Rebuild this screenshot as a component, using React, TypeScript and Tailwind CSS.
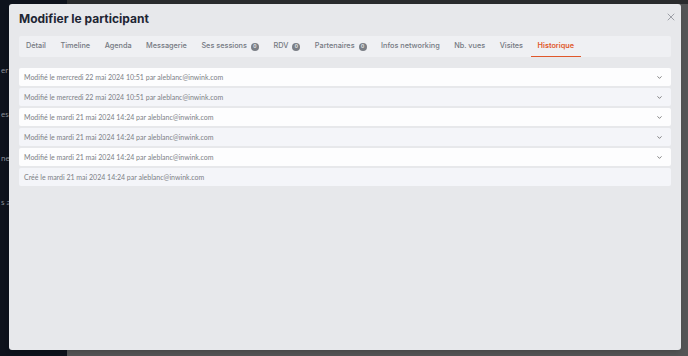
import { ChevronDown, X } from "lucide-react";

const tabs = [
  { label: "Détail" },
  { label: "Timeline" },
  { label: "Agenda" },
  { label: "Messagerie" },
  { label: "Ses sessions", badge: true },
  { label: "RDV", badge: true },
  { label: "Partenaires", badge: true },
  { label: "Infos networking" },
  { label: "Nb. vues" },
  { label: "Visites" },
  { label: "Historique", active: true },
];

const rows = [
  { text: "Modifié le mercredi 22 mai 2024 10:51 par aleblanc@inwink.com", chevron: true },
  { text: "Modifié le mercredi 22 mai 2024 10:51 par aleblanc@inwink.com", chevron: true },
  { text: "Modifié le mardi 21 mai 2024 14:24 par aleblanc@inwink.com", chevron: true },
  { text: "Modifié le mardi 21 mai 2024 14:24 par aleblanc@inwink.com", chevron: true },
  { text: "Modifié le mardi 21 mai 2024 14:24 par aleblanc@inwink.com", chevron: true },
  { text: "Créé le mardi 21 mai 2024 14:24 par aleblanc@inwink.com", chevron: false },
];

const App = () => {
  return (
    <div className="relative w-[688px] h-[356px] overflow-hidden flex bg-[#555657]">
      {/* Page behind the overlay */}
      <div className="w-[67px] h-full bg-[#0e121c] flex flex-col gap-[32px] pt-[64px] pl-[1px] text-[8px] text-[#8b8f97] font-['Lato',sans-serif]">
        <span>er</span>
        <span>es</span>
        <span>ne</span>
        <span>s a</span>
      </div>
      <div className="flex-1 h-full bg-[#545556]">
        <div className="h-[4px] bg-[#2a2b2d]" />
      </div>

      {/* Modal */}
      <div className="absolute left-[9px] top-[4px] w-[672px] h-[346px] bg-[#e7e8eb] rounded-[3px] shadow-md flex flex-col px-[10px] pt-[8px]">
        <div className="flex items-start justify-between">
          <h1 className="text-[12px] leading-[14px] font-bold text-[#1e2533] font-['Inter',sans-serif]">
            Modifier le participant
          </h1>
          <X className="w-[12px] h-[12px] text-[#7c8088] -mt-[1px] -mr-[6px]" strokeWidth={1.4} />
        </div>

        <div className="mt-[10px] h-[21px] bg-[#eff0f3] rounded-[2px] flex items-stretch pl-[7px] gap-[14.5px] font-['Inter',sans-serif] text-[7.3px] font-medium">
          {tabs.map((t) => (
            <div
              key={t.label}
              className={`flex items-center gap-[4px] ${
                t.active
                  ? "text-[#e0582b] font-semibold border-b-[1.5px] border-[#e0582b] px-[7px] -mx-[7px]"
                  : "text-[#747982]"
              }`}
            >
              <span>{t.label}</span>
              {t.badge && (
                <span className="w-[8px] h-[8px] rounded-full bg-[#7b7f86] text-white text-[5px] flex items-center justify-center leading-none">
                  0
                </span>
              )}
            </div>
          ))}
        </div>

        <div className="mt-[11px] flex flex-col gap-[2px] font-['Lato',sans-serif]">
          {rows.map((r, i) => (
            <div
              key={i}
              className={`h-[18px] flex items-center justify-between pl-[5px] pr-[8px] rounded-[2px] ${
                i % 2 === 0 ? "bg-[#fdfdfe]" : "bg-[#f4f5f9]"
              }`}
            >
              <span className="text-[7px] text-[#7c7f86]">{r.text}</span>
              {r.chevron && <ChevronDown className="w-[7px] h-[7px] text-[#555]" strokeWidth={2.5} />}
            </div>
          ))}
        </div>
      </div>
    </div>
  );
};

export default App;
